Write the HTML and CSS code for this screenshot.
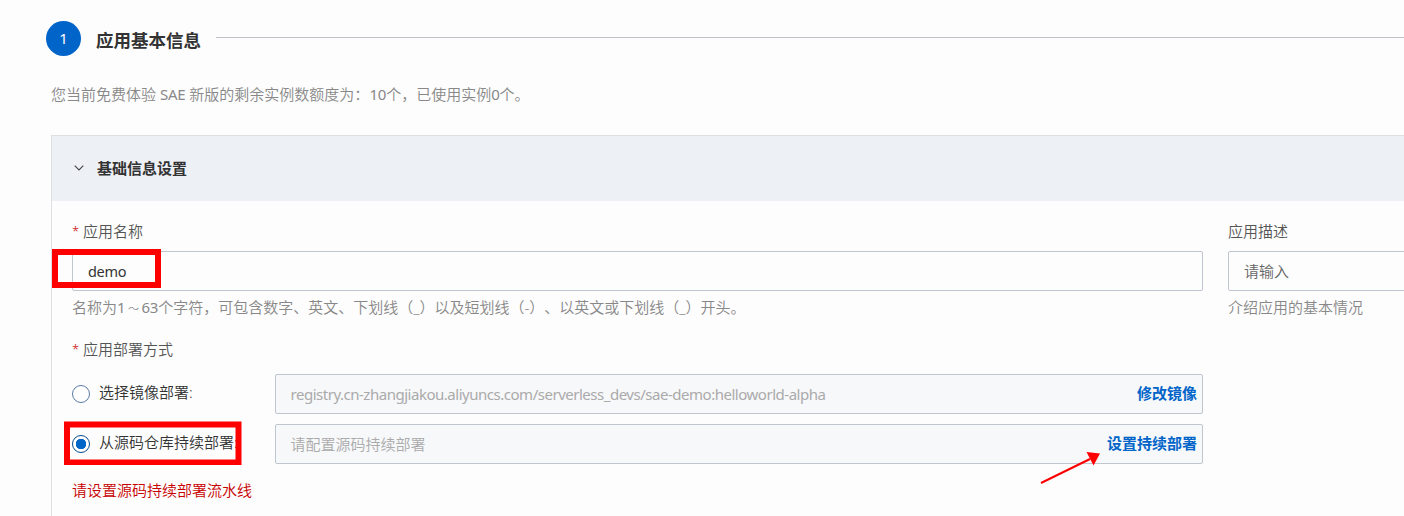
FILE: index.html
```html
<!DOCTYPE html>
<html lang="zh-CN">
<head>
<meta charset="utf-8">
<title>应用基本信息</title>
<link rel="stylesheet" href="styles.css">
</head>
<body>
<main class="page">
  <header class="step">
    <span class="step-number">1</span>
    <h1 class="step-title">应用基本信息</h1>
    <span class="step-line"></span>
  </header>
  <p class="quota">您当前免费体验 <span class="latin">SAE</span> 新版的剩余实例数额度为：<span class="latin">10</span>个，已使用实例<span class="latin">0</span>个。</p>
  <section class="panel">
    <div class="panel-header">
      <svg class="chevron" width="10" height="6" viewBox="0 0 10 6"><path d="M0.7 0.7L5 5L9.3 0.7" fill="none" stroke="#444" stroke-width="1.1"/></svg>
      <h2 class="panel-title">基础信息设置</h2>
    </div>
    <div class="panel-body">
      <div class="fields">
        <div class="field name-field">
          <label class="label"><span class="required">*</span>应用名称</label>
          <div class="input"><span class="latin">demo</span></div>
          <p class="help">名称为<span class="latin">1</span><span class="tilde">～</span><span class="latin">63</span>个字符，可包含数字、英文、下划线（_）以及短划线（-）、以英文或下划线（_）开头。</p>
          <span class="highlight highlight-name"></span>
        </div>
        <div class="field desc-field">
          <label class="label">应用描述</label>
          <div class="input placeholder">请输入</div>
          <p class="help">介绍应用的基本情况</p>
        </div>
      </div>
      <div class="label deploy-label"><span class="required">*</span>应用部署方式</div>
      <div class="option">
        <span class="radio"></span>
        <span class="option-label">选择镜像部署:</span>
        <div class="input disabled"><span class="registry">registry.cn-zhangjiakou.aliyuncs.com/serverless_devs/sae-demo:helloworld-alpha</span><a class="action">修改镜像</a></div>
      </div>
      <div class="option">
        <span class="radio checked"></span>
        <span class="option-label">从源码仓库持续部署:</span>
        <div class="input disabled"><span>请配置源码持续部署</span><a class="action">设置持续部署</a></div>
        <svg class="mark-source" width="178" height="44" viewBox="0 0 178 44"><rect x="3" y="3.500" width="171.500" height="38" fill="none" stroke="#f00" stroke-width="6"/></svg>
        <svg class="arrow" width="62" height="34" viewBox="0 0 62 34"><path d="M1 32L50 8" stroke="#f00" stroke-width="2"/><path d="M60 2.5L46.500 1L53.500 14.500Z" fill="#f00"/></svg>
      </div>
      <p class="error">请设置源码持续部署流水线</p>
    </div>
  </section>
</main>
</body>
</html>
```
FILE: styles.css
```css
* { box-sizing: border-box; }
body {
  margin: 0;
  overflow: hidden;
  background: #fdfdfd;
  color: #333;
  font: 350 15px/20px "Noto Sans", "Noto Sans CJK SC", sans-serif;
  text-spacing-trim: space-all;
}
h1, h2, p { margin: 0; }
.page { height: 516px; padding: 21px 0 0 46px; overflow: hidden; white-space: nowrap; }
.step { display: flex; height: 35px; }
.step-number {
  width: 35px; height: 35px; border-radius: 50%;
  background: #0064c8; color: #fff;
  font-size: 15px; font-weight: 400; line-height: 35px; text-align: center;
}
.step-title { margin-left: 15px; font-size: 17.5px; line-height: 38px; font-weight: 700; }
.step-line { flex: 1; height: 1px; margin: 16px 0 0 15px; background: #c0c1ca; }
.quota { margin: 28px 0 0 5px; color: #888; }
.panel { width: 1500px; height: 500px; margin: 31px 0 0 5px; border: 1px solid #dedfe2; }
.panel-header { display: flex; align-items: center; height: 65px; padding-left: 22px; background: #edf0f5; }
.chevron { flex: none; margin-top: -1px; }
.panel-title { margin: -2px 0 0 13px; font-size: 15px; line-height: 20px; font-weight: 700; }
.panel-body { padding: 20px 0 0 20px; }
.fields { display: flex; gap: 25px; }
.field { position: relative; flex: none; width: 1131px; }
.label { display: flex; height: 20px; color: #555; }
.required { width: 11px; color: #c80000; font-size: 13px; }
.input {
  display: flex; align-items: center; height: 40px; padding: 0 15px;
  border: 1px solid #c0c6cf; border-radius: 2px; color: #333;
}
.field .input { margin-top: 10px; }
.latin { font-weight: 400; letter-spacing: -.2px; }
.input .latin { font-size: 14.5px; letter-spacing: -.3px; }
.placeholder { color: #666; }
.help { height: 20px; margin-top: 6px; color: #888; }
.tilde { display: inline-block; width: 16px; font-size: 11px; text-align: center; }
.deploy-label { margin-top: 22px; }
.option { position: relative; display: flex; width: 1131px; height: 40px; margin-bottom: 10px; }
.deploy-label + .option { margin-top: 15px; }
.radio {
  width: 18px; height: 18px; margin-top: 11px;
  border: 1px solid #5a7ba5; border-radius: 50%; background: #fff;
}
.radio.checked {
  border-color: #064a8e;
  background: radial-gradient(circle, #0064c8 5px, #fff 5.5px);
}
.option-label { width: 176px; margin-left: 9px; line-height: 36px; }
.option .input { flex: 1; justify-content: space-between; padding: 0 5px 0 14.5px; background: #f7f8fa; color: #aaa; }
.registry { font-weight: 400; letter-spacing: -.48px; }
.action { margin-top: -2px; color: #0064c8; font-weight: 700; }
.highlight { position: absolute; border: 6px solid #f00; }
.highlight-name { left: -20px; top: 28px; width: 109px; height: 39px; }
.mark-source { position: absolute; left: -8px; top: -3px; }
.arrow { position: absolute; left: 968px; top: 27px; }
.error { margin-top: 16px; color: #c80000; }
```
